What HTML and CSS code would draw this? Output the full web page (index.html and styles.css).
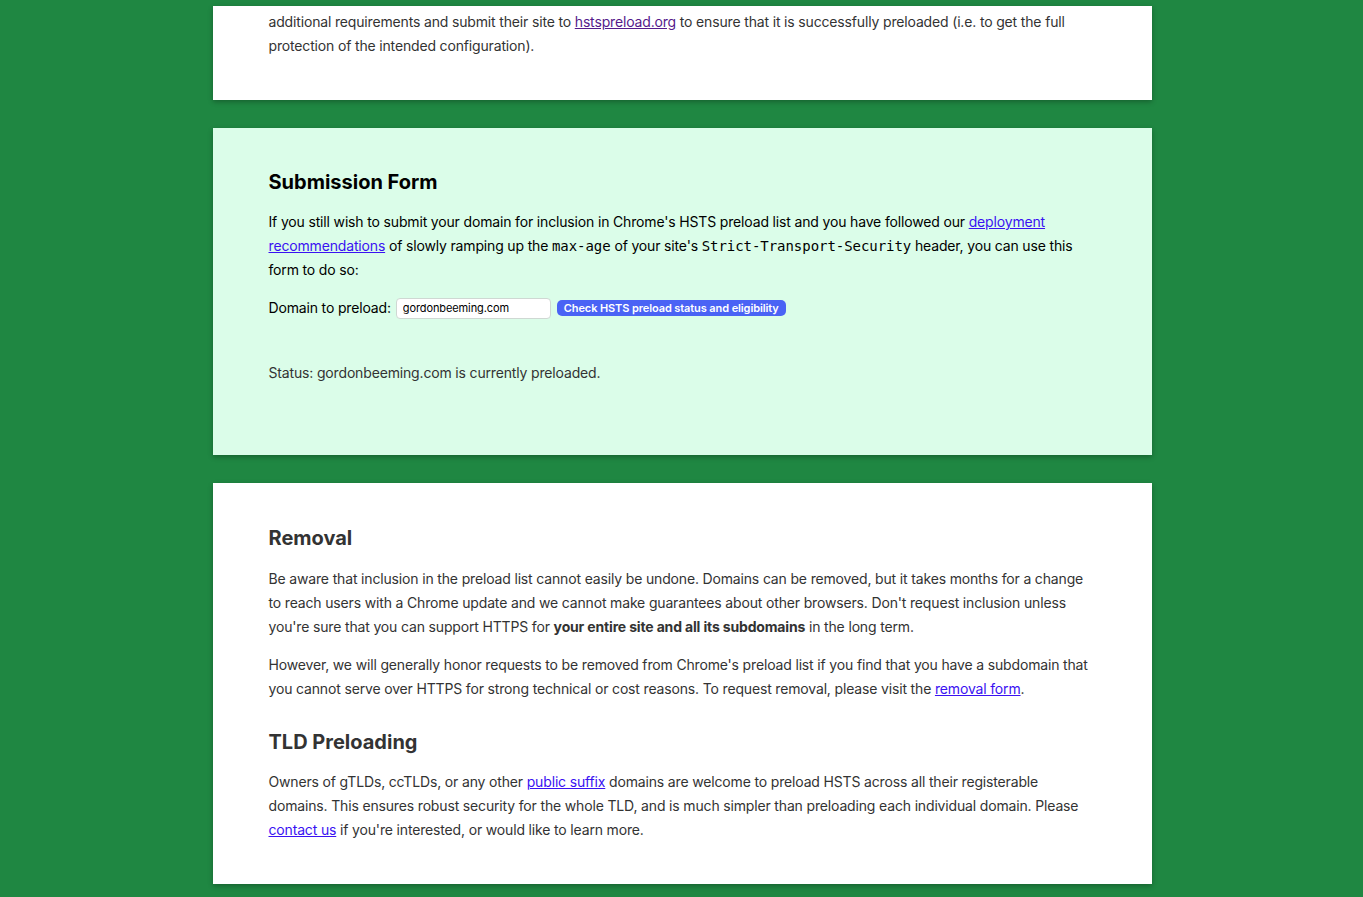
FILE: index.html
```html
<!DOCTYPE html>
<html lang="en">
<head>
<meta charset="utf-8">
<title>HSTS Preload List Submission</title>
<link rel="stylesheet" href="styles.css">
</head>
<body>
<main class="page">
  <section class="card card-top">
    <p>additional requirements and submit their site to <a class="visited" href="#">hstspreload.org</a> to ensure that it is successfully preloaded (i.e. to get the full protection of the intended configuration).</p>
  </section>

  <section class="card card-form">
    <h2>Submission Form</h2>
    <p>If you still wish to submit your domain for inclusion in Chrome's HSTS preload list and you have followed our <a href="#">deployment recommendations</a> of slowly ramping up the <code>max-age</code> of your site's <code>Strict-Transport-Security</code> header, you can use this form to do so:</p>
    <form class="form-row">
      <label for="domain">Domain to preload:</label>
      <input id="domain" class="domain-input" type="text" value="gordonbeeming.com">
      <button type="button" class="check-btn">Check HSTS preload status and eligibility</button>
    </form>
    <p class="status">Status: gordonbeeming.com is currently preloaded.</p>
  </section>

  <section class="card card-info">
    <h2>Removal</h2>
    <p>Be aware that inclusion in the preload list cannot easily be undone. Domains can be removed, but it takes months for a change to reach users with a Chrome update and we cannot make guarantees about other browsers. Don't request inclusion unless you're sure that you can support HTTPS for <strong>your entire site and all its subdomains</strong> in the long term.</p>
    <p>However, we will generally honor requests to be removed from Chrome's preload list if you find that you have a subdomain that you cannot serve over HTTPS for strong technical or cost reasons. To request removal, please visit the <a href="#">removal form</a>.</p>
    <h2 class="h-tld">TLD Preloading</h2>
    <p>Owners of gTLDs, ccTLDs, or any other <a href="#">public suffix</a> domains are welcome to preload HSTS across all their registerable domains. This ensures robust security for the whole TLD, and is much simpler than preloading each individual domain. Please <a href="#">contact us</a> if you're interested, or would like to learn more.</p>
  </section>
</main>
</body>
</html>
```

FILE: styles.css
```css
html, body {
  margin: 0;
  padding: 0;
}
body {
  background: #1f8742;
  font-family: Inter, "Noto Sans", "Liberation Sans", sans-serif;
  font-size: 14px;
  line-height: 24px;
  letter-spacing: -0.16px;
  color: #333333;
  height: 897px;
  overflow: hidden;
  padding-left: 1px;
}
.page {
  width: 939px;
  margin: 0 auto;
  padding-top: 6px;
  display: flex;
  flex-direction: column;
  gap: 28px;
}
.card {
  background: #ffffff;
  box-shadow: 0 2px 5px rgba(0, 0, 0, 0.28);
  padding: 42px 56px 42px;
}
.card p {
  margin: 0 0 14px;
}
.card p:last-child {
  margin-bottom: 0;
}
.card-top {
  padding-top: 4px;
  padding-bottom: 42px;
}
.card h2 {
  font-size: 20px;
  line-height: 24px;
  font-weight: 700;
  margin: 0 0 16px;
  letter-spacing: 0;
}
.card-info {
  padding-top: 43px;
  padding-bottom: 42px;
}
.card-info h2 {
  margin-bottom: 17px;
}
.card-info .h-tld {
  margin-top: 29px;
  margin-bottom: 16px;
}
.card-form {
  background: #dbfde9;
  color: #000000;
  padding-bottom: 70px;
}
a {
  color: #3a12f2;
  text-decoration: underline;
}
a.visited {
  color: #551a8b;
}
code {
  font-family: "DejaVu Sans Mono", "Liberation Mono", monospace;
  font-size: 14px;
  letter-spacing: -0.05px;
}
.form-row {
  display: flex;
  align-items: center;
  gap: 5px;
  height: 24px;
  margin: 14px 0 41px;
}
.domain-input {
  width: 155px;
  height: 21px;
  box-sizing: border-box;
  border: 1px solid #cfd8d3;
  border-radius: 4px;
  background: #ffffff;
  font-family: Inter, "Noto Sans", sans-serif;
  font-size: 11px;
  letter-spacing: -0.1px;
  padding: 0 6px;
  color: #000;
}
.check-btn {
  height: 16px;
  margin-left: 1px;
  padding: 0 7px;
  border: none;
  border-radius: 5px;
  background: #4a63f5;
  color: #ffffff;
  font-family: Inter, "Noto Sans", sans-serif;
  font-size: 11px;
  font-weight: 600;
  letter-spacing: -0.1px;
  line-height: 16px;
  white-space: nowrap;
}
.card-form .status {
  color: #333333;
}
```
